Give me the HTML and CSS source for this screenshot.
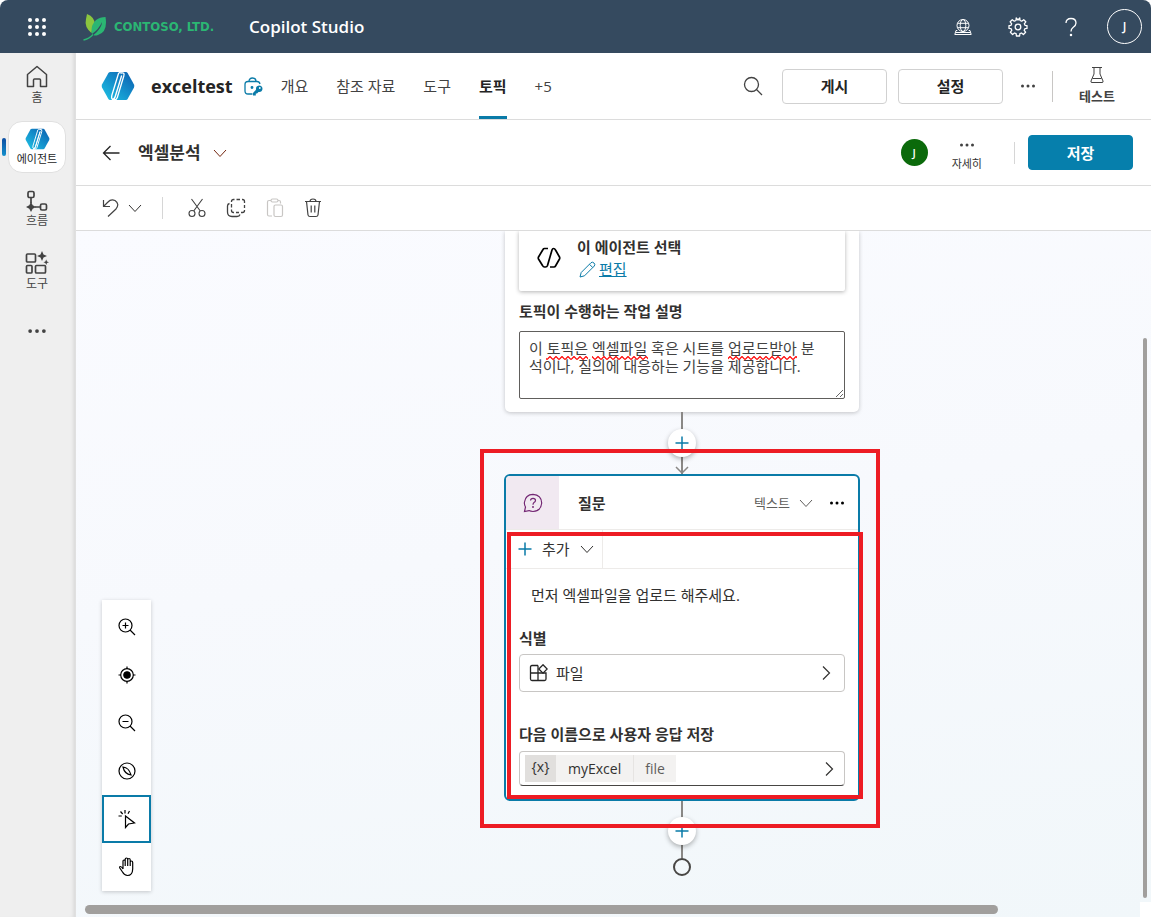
FILE: index.html
```html
<!DOCTYPE html>
<html lang="ko">
<head>
  <meta charset="UTF-8">
  <meta name="viewport" content="width=device-width, initial-scale=1.0">
  <title>Copilot Studio</title>
  <link rel="stylesheet" href="styles.css">
</head>
<body>
  <svg class="defs" width="0" height="0" aria-hidden="true">
    <defs>
      <linearGradient id="agentBlue" x1="0" y1="1" x2="1" y2="0">
        <stop offset="0" stop-color="#1fc4e4"/>
        <stop offset="0.5" stop-color="#1490cc"/>
        <stop offset="1" stop-color="#0a5cad"/>
      </linearGradient>
      <pattern id="wave" width="6" height="4" patternUnits="userSpaceOnUse">
        <path d="M0 3.500L3 .500L6 3.500" fill="none" stroke="#f00" stroke-width="1.200"/>
      </pattern>
      <symbol id="agent" viewBox="0 0 34 30">
        <path d="M9.500 1H25Q26 1 26.600 2L33 13.500Q33.600 15 33 16.500L26.600 28Q26 29 25 29H9Q8 29 7.400 28L1 16.500Q.400 15 1 13.500L7.400 2Q8 1 9.500 1Z" fill="url(#agentBlue)"/>
        <path d="M17.500 2.500Q18.500 1 20 2Q24 1 22.800 5L16.300 26.500Q15.500 29 13 28.800H11Q13.500 28 14.200 25.500L20.500 5M17.500 2.500L10.800 24.500Q10 28 12 28.500Q13.500 28.300 14.200 25.800L20.700 4.500" fill="none" stroke="#fff" stroke-width="1.300"/>
      </symbol>
      <symbol id="down" viewBox="0 0 14 14">
        <path d="M1 4L7 10.500L13 4" fill="none" stroke="currentColor"/>
      </symbol>
      <symbol id="right" viewBox="0 0 14 14">
        <path d="M4 .500L10.500 7L4 13.500" fill="none" stroke="currentColor" stroke-width="1.200"/>
      </symbol>
      <symbol id="plus" viewBox="0 0 14 14">
        <path d="M7 .500V13.500M.500 7H13.500" fill="none" stroke="currentColor" stroke-width="1.500"/>
      </symbol>
      <symbol id="dots" viewBox="0 0 16 6">
        <circle cx="2.500" cy="3" r="1.500"/><circle cx="8" cy="3" r="1.500"/><circle cx="13.500" cy="3" r="1.500"/>
      </symbol>
    </defs>
  </svg>

  <header class="topbar">
    <button class="icon-btn waffle" aria-label="앱 시작 관리자">
      <svg width="20" height="20" viewBox="0 0 20 20" fill="#fff">
        <circle cx="3" cy="3" r="2"/><circle cx="10" cy="3" r="2"/><circle cx="17" cy="3" r="2"/>
        <circle cx="3" cy="10" r="2"/><circle cx="10" cy="10" r="2"/><circle cx="17" cy="10" r="2"/>
        <circle cx="3" cy="17" r="2"/><circle cx="10" cy="17" r="2"/><circle cx="17" cy="17" r="2"/>
      </svg>
    </button>
    <a class="brand" href="#">
      <svg width="24" height="28" viewBox="0 0 24 28">
        <path d="M4 1Q12 4 12 12Q9 15 8.500 20Q1 14 3 6Z" fill="#8cc63f"/>
        <path d="M22.500 4Q25 19 15 22Q12 23 10.500 22Q19 15 19 9Q16 16 9 21Q7 13 13 7Q17 4 22.500 4Z" fill="#2bb673"/>
        <path d="M.500 27Q6 26 10 21.500" fill="none" stroke="#2bb673" stroke-width="1.300"/>
      </svg>
      <span>CONTOSO, LTD.</span>
    </a>
    <span class="product">Copilot Studio</span>
    <nav class="top-actions">
      <button class="icon-btn" aria-label="환경">
        <svg width="18" height="18" viewBox="0 0 18 18" fill="none" stroke="#fff">
          <circle cx="9" cy="7.500" r="6"/><ellipse cx="9" cy="7.500" rx="2.800" ry="6"/>
          <path d="M3.500 5.300H14.500M3.500 9.700H14.500M3.300 12.500H2L.800 16.500H17.200L16 12.500H14.700M2 14.500H16"/>
        </svg>
      </button>
      <button class="icon-btn" aria-label="설정">
        <svg width="20" height="20" viewBox="0 0 20 20" fill="none" stroke="#fff" stroke-width="1.300" stroke-linejoin="round">
          <path d="M8.200 1L8 3.500L6.300 4.200L4.300 2.700L2.200 4.800L3.700 6.800L3 8.300L1 8.600V11.400L3.100 11.700L3.800 13.300L2.400 15.200L4.600 17.500L6.500 16L8.100 16.700L8.400 19H11.600L11.900 16.700L13.500 16L15.400 17.500L17.600 15.200L16.200 13.300L16.900 11.700L19 11.400V8.600L17 8.300L16.300 6.800L17.800 4.800L15.700 2.700L13.700 4.200L12 3.500L11.800 1L10 3Z"/>
          <circle cx="10" cy="10" r="2.800"/>
        </svg>
      </button>
      <button class="icon-btn" aria-label="도움말">
        <svg width="14" height="20" viewBox="0 0 14 20" fill="none" stroke="#fff" stroke-width="1.300">
          <path d="M2 6Q2 1.500 7 1.500Q12 1.500 12 6Q12 8.500 9 10.500Q7 12 7 14.500"/><circle cx="7" cy="18" r=".600" fill="#fff"/>
        </svg>
      </button>
      <button class="avatar avatar-top" aria-label="계정">J</button>
    </nav>
  </header>

  <div class="shell">
    <nav class="rail">
      <a class="rail-item" href="#">
        <svg width="24" height="24" viewBox="0 0 24 24" fill="none" stroke="#424242" stroke-width="1.500" stroke-linejoin="round">
          <path d="M2.500 9.500L12 1.500L21.500 9.500V21.500H15.500V15Q15.500 14 14.500 14H9.500Q8.500 14 8.500 15V21.500H2.500Z"/>
        </svg>
        <span>홈</span>
      </a>
      <a class="rail-item active" href="#">
        <svg width="25" height="22"><use href="#agent"/></svg>
        <span>에이전트</span>
      </a>
      <a class="rail-item" href="#">
        <svg width="22" height="22" viewBox="0 0 22 22" fill="none" stroke="#424242" stroke-width="1.700">
          <rect x="2" y="1.500" width="6" height="6" rx="1.500"/>
          <rect x="14.500" y="14" width="6" height="6" rx="1.500"/>
          <path d="M5 7.500V13M9 17H14.500"/>
          <path d="M5 11.800L6.700 15.300L10.200 17L6.700 18.700L5 22L3.300 18.700L0 17L3.300 15.300Z" fill="#424242" stroke="none"/>
        </svg>
        <span>흐름</span>
      </a>
      <a class="rail-item" href="#">
        <svg width="24" height="24" viewBox="0 0 24 24" fill="none" stroke="#424242" stroke-width="1.700">
          <rect x="1.500" y="3" width="9" height="8" rx="1"/>
          <rect x="1.500" y="14.500" width="5.500" height="7.500" rx="1"/>
          <rect x="10.500" y="14.500" width="10" height="7.500" rx="1"/>
          <path d="M17 0L18.500 3.500L22 5L18.500 6.500L17 10L15.500 6.500L12 5L15.500 3.500ZM21.200 8.500L22 10.500L24 11.300L22 12.100L21.200 14L20.400 12.100L18.400 11.300L20.400 10.500Z" fill="#424242" stroke="none"/>
        </svg>
        <span>도구</span>
      </a>
      <button class="icon-btn rail-more" aria-label="더 보기">
        <svg width="20" height="8" fill="#424242"><use href="#dots"/></svg>
      </button>
    </nav>

    <main class="workspace">
      <div class="agent-bar">
        <svg width="34" height="30"><use href="#agent"/></svg>
        <h1>exceltest</h1>
        <svg class="lock" width="19" height="19" viewBox="0 0 19 19" fill="none" stroke="#0a7ba8" stroke-width="1.300">
          <path d="M8.500 17H4Q1 17 1 14V7.500Q1 4.500 4 4.500H13Q15.500 4.500 16 7M5 4.500Q5 1 8.500 1Q12 1 12 4.500"/>
          <circle cx="8" cy="10.500" r=".800" fill="#0a7ba8"/>
          <path d="M9 18.500V16L12 12.800Q11.500 9 15 8.500Q18.500 8.800 18.500 12Q18 15.500 14.500 15L13 16.500H11.800V18.500Z" fill="#0a7ba8" stroke="none"/>
          <circle cx="15.800" cy="11" r=".900" fill="#fff" stroke="none"/>
        </svg>
        <nav class="tabs">
          <a href="#">개요</a>
          <a href="#">참조 자료</a>
          <a href="#">도구</a>
          <a class="current" href="#">토픽</a>
          <a href="#">+5</a>
        </nav>
        <div class="agent-actions">
          <button class="icon-btn search" aria-label="검색">
            <svg width="20" height="20" viewBox="0 0 20 20" fill="none" stroke="#424242" stroke-width="1.300"><circle cx="8.500" cy="8.500" r="7"/><path d="M13.500 13.500L19 19"/></svg>
          </button>
          <button class="btn">게시</button>
          <button class="btn">설정</button>
          <button class="icon-btn more" aria-label="추가 옵션"><svg width="16" height="6" fill="#424242"><use href="#dots"/></svg></button>
          <span class="divider tall"></span>
          <button class="test-btn">
            <svg width="16" height="18" viewBox="0 0 16 18" fill="none" stroke="#424242"><path d="M3 1.500H13M5 1.500V8L2 15Q1.500 16.500 3 16.500H13Q14.500 16.500 14 15L11 8V1.500M3.500 12.500H12.500"/></svg>
            <span>테스트</span>
          </button>
        </div>
      </div>

      <div class="topic-bar">
        <button class="icon-btn" aria-label="뒤로">
          <svg width="18" height="16" viewBox="0 0 18 16" fill="none" stroke="#242424" stroke-width="1.300"><path d="M8.500 1L1.500 8L8.500 15M1.500 8H17.500"/></svg>
        </button>
        <h2>엑셀분석</h2>
        <button class="icon-btn topic-menu" aria-label="토픽 선택"><svg width="14" height="14"><use href="#down"/></svg></button>
        <div class="topic-actions">
          <span class="avatar avatar-green">J</span>
          <button class="details">
            <svg width="16" height="6" fill="#424242"><use href="#dots"/></svg>
            <span>자세히</span>
          </button>
          <span class="divider"></span>
          <button class="btn primary">저장</button>
        </div>
      </div>

      <div class="toolbar">
        <button class="icon-btn" aria-label="실행 취소">
          <svg width="18" height="20" viewBox="0 0 18 20" fill="none" stroke="#424242" stroke-width="1.200"><path d="M1.500 2V8.500H8M1.500 8.500L6 4Q9 .700 13 2.500Q18 6 14 11L6 18.500"/></svg>
        </button>
        <button class="icon-btn undo-menu" aria-label="실행 취소 기록"><svg width="14" height="14"><use href="#down"/></svg></button>
        <span class="divider"></span>
        <button class="icon-btn" aria-label="잘라내기">
          <svg width="18" height="20" viewBox="0 0 18 20" fill="none" stroke="#424242" stroke-width="1.100"><circle cx="4" cy="15.500" r="3"/><circle cx="14" cy="15.500" r="3"/><path d="M3.500 1L12.300 13M14.500 1L5.700 13"/></svg>
        </button>
        <button class="icon-btn" aria-label="복사">
          <svg width="20" height="20" viewBox="0 0 20 20" fill="none" stroke="#424242" stroke-width="1.300"><path d="M5.500 4V3.500Q5.500 1.500 7.500 1.500H8.500M10.500 1.500H14M16 1.500H16.500Q18.500 1.500 18.500 3.500V5M18.500 7V10M18.500 12V12.500Q18.500 14.500 16.500 14.500H15M13 14.500H10M8 14.500H7.500Q5.500 14.500 5.500 12.500V11.500M5.500 9.500V6"/><path d="M3.500 5.500Q1.500 6 1.500 8V14Q1.500 18.500 6 18.500H11Q13.500 18.500 14 16.500"/></svg>
        </button>
        <button class="icon-btn" aria-label="붙여넣기" disabled>
          <svg width="18" height="20" viewBox="0 0 18 20" fill="none" stroke="#c8c6c4" stroke-width="1.200"><path d="M6 18H3Q1.500 18 1.500 16.500V4Q1.500 2.500 3 2.500H5M12 2.500H13Q14.500 2.500 14.500 4V5.500"/><rect x="5" y="1" width="7" height="3" rx="1.500"/><rect x="8" y="7" width="8.500" height="11.500" rx="1.500"/></svg>
        </button>
        <button class="icon-btn" aria-label="삭제">
          <svg width="18" height="20" viewBox="0 0 18 20" fill="none" stroke="#424242" stroke-width="1.200"><path d="M1 3.500H17M6 3.500Q6 1 9 1Q12 1 12 3.500M2.500 3.500L4 17Q4.300 18.500 6 18.500H12Q13.700 18.500 14 17L15.500 3.500M7.200 7.500V14.500M10.800 7.500V14.500"/></svg>
        </button>
      </div>

      <div class="canvas">
        <div class="flow">
          <section class="node trigger">
            <div class="trigger-card">
              <svg width="26" height="24" viewBox="0 0 26 24" fill="none" stroke="#000" stroke-width="1.700" stroke-linejoin="round">
                <path d="M12 2.500H8.500Q7.500 2.500 7 3.500L2.500 11Q2 12 2.500 13L6.500 19.500Q7.200 21 8.500 21H9.500Q11 21 11.500 19.500L16 4Q16.500 2.500 17.500 2.500Q18.700 2.500 19.500 4L23.500 11Q24 12 23.500 13L19.500 20Q19 21 18 21H14"/>
              </svg>
              <div>
                <strong>이 에이전트 선택</strong>
                <a class="edit" href="#">
                  <svg width="17" height="17" viewBox="0 0 17 17" fill="none" stroke="#0a7ba8"><path d="M1 16L2.200 11.500L12 1.700Q13.500 .500 15 2Q16.500 3.500 15.300 5L5.500 14.800ZM10.500 3.300L13.700 6.500"/></svg>
                  <span>편집</span>
                </a>
              </div>
            </div>
            <label for="topicDesc">토픽이 수행하는 작업 설명</label>
            <div class="desc">
              <textarea id="topicDesc" spellcheck="false">이 토픽은 엑셀파일 혹은 시트를 업로드받아 분석이나, 질의에 대응하는 기능을 제공합니다.</textarea>
              <svg class="spell" width="300" height="4" aria-hidden="true">
                <rect x="17" width="42" height="4" fill="url(#wave)"/>
                <rect x="63" width="56" height="4" fill="url(#wave)"/>
                <rect x="199" width="69" height="4" fill="url(#wave)"/>
              </svg>
            </div>
          </section>

          <div class="link">
            <button class="add-node" aria-label="노드 추가"><svg width="14" height="14"><use href="#plus"/></svg></button>
            <svg class="arrow" width="14" height="8" viewBox="0 0 14 8" fill="none" stroke="#8a8886" stroke-width="1.500"><path d="M1 1L7 7L13 1"/></svg>
          </div>

          <section class="node question">
            <div class="q-head">
              <span class="q-icon">
                <svg width="20" height="20" viewBox="0 0 20 20" fill="none" stroke="#742774" stroke-width="1.200"><path d="M1.500 18.500L2.500 14Q1 11.500 1.500 9Q2.500 1.500 10 1.300Q18.500 2 18.700 10Q18 18 10 18.500Q7.500 18.500 6 17.600Z"/><path d="M7.500 7.500Q7.500 5.300 10 5.300Q12.500 5.300 12.500 7.500Q12.500 8.700 11 9.500Q10 10.300 10 11.800"/><circle cx="10" cy="14" r=".400"/></svg>
              </span>
              <strong>질문</strong>
              <button class="q-type">텍스트 <svg width="14" height="14"><use href="#down"/></svg></button>
              <button class="icon-btn" aria-label="노드 메뉴"><svg width="16" height="6" fill="#000"><use href="#dots"/></svg></button>
            </div>
            <div class="q-add">
              <button>
                <svg class="blue" width="14" height="14"><use href="#plus"/></svg>
                추가
                <svg width="14" height="14"><use href="#down"/></svg>
              </button>
            </div>
            <div class="q-body">
              <p>먼저 엑셀파일을 업로드 해주세요.</p>
              <span class="field-label" id="identify">식별</span>
              <button class="picker" aria-labelledby="identify">
                <svg width="19" height="18" viewBox="0 0 19 18" fill="none" stroke="#242424" stroke-width="1.300"><path d="M9 1.500H3Q1.500 1.500 1.500 3V15Q1.500 16.500 3 16.500H15.500Q17 16.500 17 15V9H1.500M9 1.500V16.500"/><path d="M14 .800L18.200 5L14 9.200L9.800 5Z" fill="#fff"/></svg>
                <span>파일</span>
                <svg class="chev" width="14" height="14"><use href="#right"/></svg>
              </button>
              <span class="field-label" id="saveAs">다음 이름으로 사용자 응답 저장</span>
              <button class="picker variable" aria-labelledby="saveAs">
                <span class="var-icon">{x}</span>
                <span class="var-name">myExcel</span>
                <span class="var-type">file</span>
                <svg class="chev" width="14" height="14"><use href="#right"/></svg>
              </button>
            </div>
          </section>

          <div class="link end">
            <button class="add-node" aria-label="노드 추가"><svg width="14" height="14"><use href="#plus"/></svg></button>
          </div>
          <div class="end-dot"></div>

          <div class="mark mark-outer"></div>
          <div class="mark mark-inner"></div>
        </div>

        <div class="zoom-tools">
          <button aria-label="확대"><svg width="18" height="18" viewBox="0 0 18 18"><circle cx="7.500" cy="7.500" r="6.500"/><path d="M12 12L17 17M4.500 7.500H10.500M7.500 4.500V10.500"/></svg></button>
          <button aria-label="가운데 맞춤"><svg width="18" height="18" viewBox="0 0 18 18"><circle cx="9" cy="9" r="6.300"/><circle cx="9" cy="9" r="3.200" fill="#000"/><path d="M9 .500V3M9 15V17.500M.500 9H3M15 9H17.500"/></svg></button>
          <button aria-label="축소"><svg width="18" height="18" viewBox="0 0 18 18"><circle cx="7.500" cy="7.500" r="6.500"/><path d="M12 12L17 17M4.500 7.500H10.500"/></svg></button>
          <button aria-label="미니맵"><svg width="18" height="18" viewBox="0 0 18 18"><circle cx="9" cy="9" r="8"/><path d="M5 5Q11 5.500 13 13Q6.500 12 5 5Z"/></svg></button>
          <button class="selected" aria-label="선택"><svg width="18" height="20" viewBox="0 0 18 20"><path d="M7.500 7V18.500L10.500 15L16.500 14ZM7 1V4.500M2.500 2.500L4.700 5M.500 7H3.800M11.500 2L10 4.700"/></svg></button>
          <button aria-label="이동"><svg width="18" height="20" viewBox="0 0 18 20"><path d="M5 12V4Q5 3 6 3Q7.200 3 7.200 4V9M7.200 8V2.200Q7.200 1 8.500 1Q9.700 1 9.700 2.200V9M9.700 4V2.500Q9.800 1.500 11 1.500Q12.200 1.500 12.200 2.700V9M12.200 5Q12.300 4 13.400 4Q14.700 4 14.700 5.500V12Q14.500 18.500 9.500 18.500Q6.500 18.500 4.500 15L1.800 11Q1.200 9.500 2.500 9.500Q3.500 9.500 5 12"/></svg></button>
        </div>

        <div class="scroll-x"></div>
        <div class="scroll-y"></div>
        <div class="scroll-corner"></div>
      </div>
    </main>
  </div>
</body>
</html>
```
FILE: styles.css
```css
* {
  box-sizing: border-box;
}
body {
  margin: 0;
  height: 100vh;
  display: flex;
  flex-direction: column;
  overflow: hidden;
  font-family: "Open Sans", "Noto Sans CJK KR", sans-serif;
  font-size: 15px;
  line-height: 20px;
  color: #323130;
  background: #fff;
}
button {
  font: inherit;
  color: inherit;
  background: none;
  border: none;
  padding: 0;
  cursor: pointer;
}
a {
  color: inherit;
  text-decoration: none;
}
svg {
  display: block;
  flex: none;
}
.defs {
  position: absolute;
}
h1, h2, p {
  margin: 0;
}
.icon-btn {
  display: flex;
  align-items: center;
  justify-content: center;
}
.divider {
  width: 1px;
  height: 22px;
  background: #d6d6d6;
}
.divider.tall {
  height: 31px;
  background: #c8c6c4;
}
.avatar {
  display: flex;
  align-items: center;
  justify-content: center;
  border-radius: 50%;
  color: #fff;
  font-weight: 600;
}

/* top bar */
.topbar {
  flex: none;
  height: 53px;
  display: flex;
  align-items: center;
  padding: 0 9px 0 27px;
  background: #354a5f;
  border-radius: 8px 8px 0 0;
  color: #fff;
}
.brand {
  display: flex;
  align-items: center;
  gap: 7px;
  margin-left: 36px;
  width: 166px;
  color: #2bb673;
  font-family: "DejaVu Sans Condensed", "DejaVu Sans", sans-serif;
  font-weight: bold;
  font-size: 13px;
  white-space: nowrap;
}
.product {
  font-size: 17px;
  font-weight: 600;
}
.top-actions {
  display: flex;
  align-items: center;
  gap: 36px;
  margin-left: auto;
}
.avatar-top {
  width: 35px;
  height: 35px;
  border: 1px solid #fff;
  font-size: 12px;
  margin-left: -7px;
}

/* left rail */
.shell {
  flex: 1;
  min-height: 0;
  display: flex;
}
.rail {
  flex: none;
  width: 76px;
  display: flex;
  flex-direction: column;
  align-items: center;
  gap: 10px;
  padding: 6px 1px 0 0;
  background: #efefef;
  border-right: 1px solid #e0e0e0;
  box-shadow: inset -4px 0 4px -3px rgba(0, 0, 0, 0.12);
}
.rail-item {
  position: relative;
  width: 58px;
  height: 52px;
  display: flex;
  flex-direction: column;
  align-items: center;
  justify-content: center;
  font-size: 12px;
  line-height: 17px;
  color: #424242;
}
.rail-item.active {
  background: #fff;
  border: 1px solid #e0e0e0;
  border-radius: 14px;
  font-size: 11px;
  color: #242424;
}
.rail-item.active::before {
  content: "";
  position: absolute;
  left: -7px;
  top: 16px;
  width: 4px;
  height: 18px;
  border-radius: 2px;
  background: linear-gradient(#0c4da2, #1490cc);
}
.rail-more {
  width: 40px;
  height: 48px;
}

/* agent bar */
.workspace {
  flex: 1;
  min-width: 0;
  display: flex;
  flex-direction: column;
}
.agent-bar {
  flex: none;
  height: 67px;
  display: flex;
  align-items: center;
  padding: 0 36px 0 25px;
  border-bottom: 1px solid #dcdcdc;
  white-space: nowrap;
}
.agent-bar h1 {
  margin-left: 16px;
  font-size: 18px;
  font-weight: bold;
  color: #242424;
}
.lock {
  margin-left: 11px;
}
.tabs {
  align-self: stretch;
  display: flex;
  gap: 28px;
  margin-left: 18px;
  color: #424242;
}
.tabs a {
  display: flex;
  align-items: center;
  border-bottom: 3px solid transparent;
  border-top: 3px solid transparent;
}
.tabs .current {
  font-weight: bold;
  color: #242424;
  border-bottom-color: #0a7ba8;
}
.agent-actions {
  display: flex;
  align-items: center;
  margin-left: auto;
}
.btn {
  width: 105px;
  height: 35px;
  border: 1px solid #d1d1d1;
  border-radius: 4px;
  background: #fff;
  font-weight: bold;
  color: #242424;
}
.agent-actions .btn {
  margin-right: 11px;
}
.search {
  width: 20px;
  margin-right: 19px;
}
.more {
  width: 28px;
  margin-right: 10px;
}
.test-btn {
  display: flex;
  flex-direction: column;
  align-items: center;
  gap: 2px;
  margin-left: 26px;
  font-size: 13px;
  font-weight: 600;
  color: #424242;
}

/* topic bar */
.topic-bar {
  flex: none;
  height: 66px;
  display: flex;
  align-items: center;
  padding: 0 18px 0 26px;
  border-bottom: 1px solid #dcdcdc;
}
.topic-bar h2 {
  margin-left: 18px;
  font-size: 17px;
  font-weight: bold;
}
.topic-menu {
  margin-left: 12px;
  color: #742710;
}
.topic-actions {
  display: flex;
  align-items: center;
  margin-left: auto;
}
.avatar-green {
  width: 27px;
  height: 27px;
  background: #0b6a0b;
  font-size: 11px;
}
.details {
  display: flex;
  flex-direction: column;
  align-items: center;
  gap: 8px;
  margin: 0 32px 0 24px;
  padding-top: 8px;
  font-size: 11px;
  line-height: 16px;
}
.btn.primary {
  margin-left: 13px;
  background: #067fac;
  border-color: #067fac;
  color: #fff;
}

/* toolbar */
.toolbar {
  flex: none;
  height: 45px;
  display: flex;
  align-items: center;
  gap: 20px;
  padding-left: 26px;
  border-bottom: 1px solid #dcdcdc;
}
.undo-menu {
  margin-left: -12px;
}
.toolbar .divider {
  margin-right: 5px;
}

/* canvas */
.canvas {
  flex: 1;
  min-height: 0;
  position: relative;
  overflow: hidden;
  background: linear-gradient(170deg, #fafbff, #f7f9fd 45%, #f1f7fa);
}
.flow {
  position: absolute;
  left: 428px;
  top: 0;
  width: 356px;
  display: flex;
  flex-direction: column;
  align-items: center;
}
.node {
  background: #fff;
}
.trigger {
  width: 354px;
  padding: 0 14px 13px;
  border-radius: 0 0 5px 5px;
  box-shadow: 0 1px 4px rgba(0, 0, 0, 0.22);
}
.trigger-card {
  display: flex;
  align-items: center;
  gap: 15px;
  height: 60px;
  padding: 0 0 6px 17px;
  border-radius: 0 0 2px 2px;
  box-shadow: 0 1px 4px rgba(0, 0, 0, 0.3);
}
.trigger-card strong {
  display: block;
  line-height: 22px;
}
.edit {
  display: flex;
  align-items: center;
  gap: 3px;
  padding-left: 2px;
  line-height: 22px;
  color: #0a7ba8;
}
.edit span {
  text-decoration: underline;
}
.trigger label {
  display: block;
  margin: 10px 0;
  font-weight: bold;
}
.desc {
  position: relative;
}
.desc textarea {
  display: block;
  width: 100%;
  height: 68px;
  margin: 0;
  padding: 7px 24px 7px 9px;
  border: 1px solid #605e5c;
  border-radius: 2px;
  background: transparent;
  font: inherit;
  line-height: 18px;
  word-break: break-all;
  color: #424242;
  overflow: hidden;
  resize: vertical;
}
.spell {
  position: absolute;
  left: 10px;
  top: 25px;
  pointer-events: none;
}
.link {
  position: relative;
  width: 28px;
  height: 62px;
  padding-top: 17px;
  background: linear-gradient(#8a8886, #8a8886) center / 2px 100% no-repeat;
}
.link.end {
  height: 57px;
  padding-top: 16px;
}
.add-node {
  display: flex;
  align-items: center;
  justify-content: center;
  width: 28px;
  height: 28px;
  border-radius: 50%;
  background: #fff;
  color: #0a7ba8;
  box-shadow: 0 2px 5px rgba(0, 0, 0, 0.3);
}
.arrow {
  position: absolute;
  left: 7px;
  bottom: 0;
}
.end-dot {
  width: 18px;
  height: 18px;
  border: 2px solid #484644;
  border-radius: 50%;
}

/* question node */
.question {
  width: 100%;
  border: 2px solid #0a7ba8;
  border-radius: 6px;
  overflow: hidden;
}
.q-head {
  display: flex;
  align-items: center;
  height: 54px;
  padding-right: 13px;
  border-bottom: 1px solid #edebe9;
}
.q-icon {
  display: flex;
  align-items: center;
  justify-content: center;
  align-self: stretch;
  width: 53px;
  margin-right: 19px;
  background: #f1e9f1;
}
.q-type {
  display: flex;
  align-items: center;
  gap: 9px;
  margin: 0 16px 0 auto;
  font-size: 13px;
  color: #605e5c;
}
.q-add {
  display: flex;
  height: 39px;
  border-bottom: 1px solid #edebe9;
}
.q-add button {
  display: flex;
  align-items: center;
  gap: 10px;
  padding: 0 8px 0 12px;
  border-right: 1px solid #edebe9;
}
.q-add .blue {
  color: #0a7ba8;
}
.q-body {
  padding: 16px 13px 13px;
}
.q-body p {
  padding-left: 12px;
}
.field-label {
  display: block;
  margin: 23px 0 6px;
  font-weight: bold;
}
.picker {
  display: flex;
  align-items: center;
  gap: 8px;
  width: 100%;
  height: 38px;
  padding: 0 11px 0 9px;
  border: 1px solid #c8c6c4;
  border-radius: 4px;
}
.chev {
  margin-left: auto;
}
.picker + .field-label {
  margin: 32px 0 7px;
}
.variable {
  gap: 0;
  height: 35px;
  padding: 0 8px 0 5px;
  border-bottom-color: #484644;
  font-size: 14px;
}
.variable span {
  height: 27px;
  line-height: 27px;
  background: #f3f2f1;
}
.variable .var-icon {
  width: 31px;
  line-height: 24px;
  background: #e1dfdd;
}
.var-name {
  padding: 0 12px;
}
.variable .var-type {
  padding: 0 11px;
  border-left: 1px solid #e6e4e2;
  color: #605e5c;
}

/* highlight boxes over the flow */
.mark {
  position: absolute;
  border: 4px solid #ed1c24;
  pointer-events: none;
}
.mark-outer {
  left: -24px;
  top: 218px;
  width: 400px;
  height: 379px;
}
.mark-inner {
  left: 3px;
  top: 301px;
  width: 356px;
  height: 267px;
}

/* floating tools */
.zoom-tools {
  position: absolute;
  left: 26px;
  bottom: 26px;
  width: 49px;
  padding-top: 3px;
  background: #fff;
  box-shadow: 0 1px 4px rgba(0, 0, 0, 0.2);
}
.zoom-tools button {
  display: flex;
  align-items: center;
  justify-content: center;
  width: 100%;
  height: 48px;
}
.zoom-tools .selected {
  border: 2px solid #0a7ba8;
}
.zoom-tools svg {
  fill: none;
  stroke: #000;
  stroke-width: 1.2px;
}
.scroll-x {
  position: absolute;
  left: 9px;
  right: 153px;
  bottom: 3px;
  height: 9px;
  border-radius: 5px;
  background: #a19f9d;
}
.scroll-y {
  position: absolute;
  right: 4px;
  top: 107px;
  bottom: 19px;
  width: 4px;
  border-radius: 2px;
  background: #a19f9d;
}
.scroll-corner {
  position: absolute;
  right: 0;
  bottom: 0;
  width: 11px;
  height: 15px;
  background: #fff;
}
```
